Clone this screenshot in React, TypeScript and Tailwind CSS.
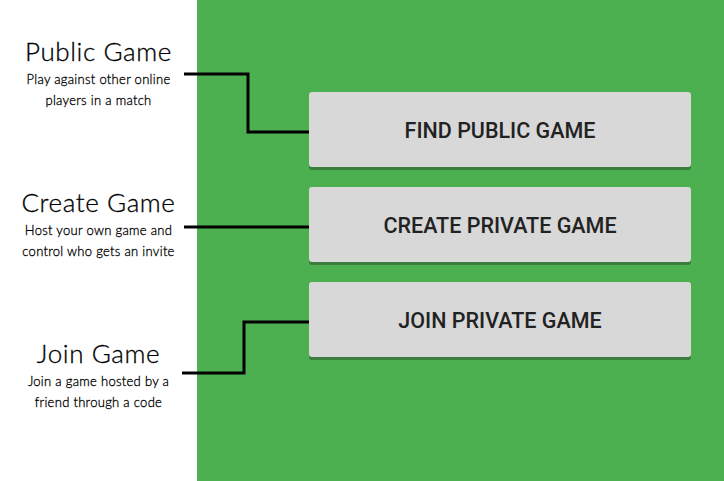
import React from 'react';

const modes = [
  { title: 'Public Game', lines: ['Play against other online', 'players in a match'] },
  { title: 'Create Game', lines: ['Host your own game and', 'control who gets an invite'] },
  { title: 'Join Game', lines: ['Join a game hosted by a', 'friend through a code'] },
];

const buttons = ['FIND PUBLIC GAME', 'CREATE PRIVATE GAME', 'JOIN PRIVATE GAME'];

export default function App() {
  return (
    <div className="relative flex h-[481px] w-[724px] overflow-hidden bg-white">
      {/* left labels */}
      <div className="flex w-[197px] flex-col gap-[76px] pt-[36px] font-['Lato',sans-serif] text-black">
        {modes.map((m) => (
          <div key={m.title} className="flex flex-col items-center">
            <div className="text-[26px] font-light leading-[30px] tracking-[0.6px] [-webkit-text-stroke:0.3px_black]">{m.title}</div>
            <div className="mt-[3px] text-center text-[13px] font-light leading-[21px] tracking-[0.3px] [-webkit-text-stroke:0.3px_black]">
              {m.lines.map((l) => (
                <div key={l}>{l}</div>
              ))}
            </div>
          </div>
        ))}
      </div>

      {/* green panel */}
      <div className="flex flex-1 flex-col gap-[20px] bg-[#4caf50] pl-[112px] pt-[92px]">
        {buttons.map((b) => (
          <button
            key={b}
            className="flex h-[75px] w-[382px] items-center justify-center rounded-[3px] bg-[#d7d8d7] pt-[3px] font-['Roboto',sans-serif] text-[21.5px] font-medium text-[#222] shadow-[0_3px_0_#3a7d3d]"
          >
            {b}
          </button>
        ))}
      </div>

      {/* connector lines */}
      <svg className="pointer-events-none absolute left-0 top-0" width="724" height="481">
        <g fill="none" stroke="#000" strokeWidth="3">
          <polyline points="184,74 248,74 248,132 309,132" />
          <polyline points="184,227 309,227" />
          <polyline points="182,373 244,373 244,322 309,322" />
        </g>
      </svg>
    </div>
  );
}
